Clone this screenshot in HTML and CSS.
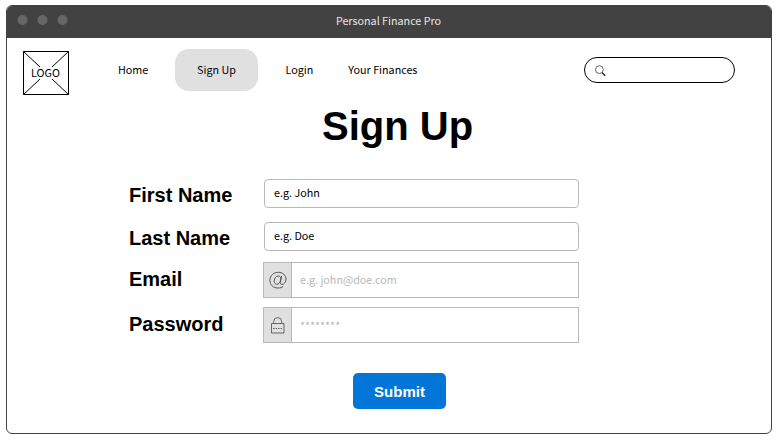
FILE: index.html
```html
<!DOCTYPE html>
<html lang="en">
<head>
<meta charset="utf-8">
<title>Personal Finance Pro</title>
<link rel="stylesheet" href="styles.css">
</head>
<body>
<div class="window">
  <header class="titlebar">
    <svg class="dots" width="60" height="12" fill="#666"><circle cx="5.500" cy="6" r="5"/><circle cx="25.500" cy="6" r="5"/><circle cx="45.500" cy="6" r="5"/></svg>
    <div class="title">Personal Finance Pro</div>
  </header>
  <div class="topbar">
    <div class="logo">
      <svg width="46" height="44" viewBox="0 0 46 44" fill="none" stroke="#000"><path d="M.5.5h45v43H.5zM.5.5 17 16M45.5.5 29 16M.5 43.5 17 28M45.5 43.5 29 28"/></svg>
      <span>LOGO</span>
    </div>
    <nav class="nav">
      <a class="home">Home</a>
      <a class="active">Sign Up</a>
      <a class="login">Login</a>
      <a class="finances">Your Finances</a>
    </nav>
    <div class="search">
      <svg width="12" height="12" viewBox="0 0 12 12" fill="none"><circle cx="4.4" cy="4.6" r="3.900" stroke="#555" stroke-width=".9"/><path d="M7.100 7.600 10.200 10.700" stroke="#111" stroke-width="1.3"/></svg>
    </div>
  </div>
  <h1>Sign Up</h1>
  <form class="form">
    <div class="row first"><label>First Name</label><div class="field">e.g. John</div></div>
    <div class="row last"><label>Last Name</label><div class="field">e.g. Doe</div></div>
    <div class="row email"><label>Email</label>
      <div class="group"><span class="addon">
        <svg width="18" height="18" viewBox="0 0 18 18" fill="none" stroke="#555" stroke-width="1"><path d="M14.2 15.300C12.8 16.500 11 17 9 17C4.200 17 .9 13.900 .9 9.400C.9 4.700 4.500 1.300 9.400 1.300C13.700 1.300 17 4.100 17 8.100C17 11.200 15 13.400 13 13.400C11.600 13.400 11 12.500 11.300 11.200L12.600 5"/><path d="M11.900 8.200C11.900 6.100 11 5 9.400 5C7.100 5 5.200 7.300 5.200 9.900C5.200 12 6.200 13.300 7.800 13.300C9.800 13.300 11.500 11 11.900 8.200Z"/></svg>
      </span><span class="hint">e.g. john@doe.com</span></div></div>
    <div class="row password"><label>Password</label>
      <div class="group"><span class="addon">
        <svg width="14" height="17" viewBox="0 0 14 17" fill="none" stroke="#666"><path d="M.5 6.500h12.500v9.500H.5zM2.700 6.500V4.600a4 4 0 0 1 8 0v1.900"/><path d="M2 11.500h10" stroke-dasharray="1.500 1"/></svg>
      </span><span class="hint mask">********</span></div></div>
    <button class="submit" type="button">Submit</button>
  </form>
</div>
</body>
</html>
```
FILE: styles.css
```css
* { box-sizing: border-box; }
body {
  margin: 0;
  padding: 5px 8px 0 6px;
  background: #fff;
  color: #000;
  font: 10.75px/16px "Noto Sans CJK SC", sans-serif;
}
.window {
  height: 429px;
  border: 1px solid #424242;
  border-radius: 6px;
  overflow: hidden;
}
.titlebar {
  display: grid;
  grid-template-columns: 1fr auto 1fr;
  align-items: center;
  height: 32px;
  background: #424242;
  color: #e6e6e6;
}
.dots { margin: 0 0 4px 10px; }
.title { padding: 0 1px 2px 0; }
.topbar { display: flex; height: 62px; padding: 11px 36px 0 16px; }
.logo { display: grid; width: 46px; height: 44px; margin-top: 2px; place-items: center; }
.logo > * { grid-area: 1 / 1; }
.logo span { padding-right: 1px; }
.nav { display: flex; height: 42px; align-items: center; margin-left: 49px; }
.nav .home { width: 57px; }
.nav .active {
  width: 83px;
  height: 42px;
  margin-right: 27.5px;
  line-height: 42px;
  text-align: center;
  border-radius: 14px;
  background: #e0e0e0;
}
.finances { margin-left: 35px; }
.search {
  width: 151px;
  height: 26px;
  margin: 8px 0 0 auto;
  padding: 7px 10px;
  border: 1px solid #000;
  border-radius: 13px;
}
.search svg { display: block; }
h1 {
  margin: 0 0 0 315px;
  height: 79px;
  font: bold 40px/52px "Liberation Sans", Arial, sans-serif;
}
.form { display: flex; flex-direction: column; width: 450px; margin-left: 122px; }
.row { display: flex; justify-content: space-between; }
label { font: bold 20px/24px "Liberation Sans", Arial, sans-serif; }
.first label, .last label { padding-top: 4px; }
.email label, .password label { padding-top: 5px; }
.field {
  width: 315px;
  height: 29px;
  padding: 5px 9px;
  border: 1px solid #b8b8b8;
  border-radius: 4px;
}
.last { margin-top: 14px; }
.email { margin-top: 11px; }
.password { margin-top: 9px; }
.group { display: flex; width: 316px; height: 36px; border: 1px solid #b8b8b8; }
.addon {
  display: grid;
  width: 28px;
  place-items: center;
  border-right: 1px solid #b8b8b8;
  background: #e0e0e0;
}
.hint { padding-left: 8px; line-height: 34px; color: #b8b8b8; }
.mask { line-height: 36px; }
.submit {
  width: 93px;
  height: 36px;
  margin: 30px 0 0 224px;
  padding: 0;
  border: 0;
  border-radius: 5px;
  background: #0275d8;
  color: #fff;
  font: bold 15px "Liberation Sans", Arial, sans-serif;
}
```
